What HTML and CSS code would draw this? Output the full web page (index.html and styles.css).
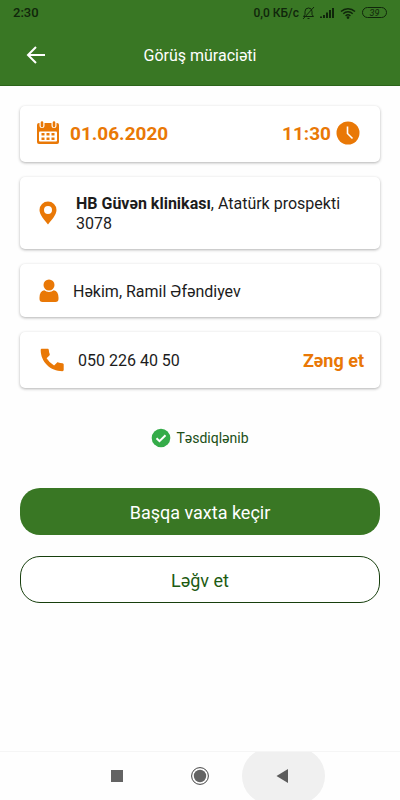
FILE: index.html
```html
<!DOCTYPE html>
<html lang="az">
<head>
<meta charset="utf-8">
<meta name="viewport" content="width=device-width, initial-scale=1">
<title>Görüş müraciəti</title>
<link rel="stylesheet" href="styles.css">
</head>
<body>
<header class="header">
  <div class="status-bar">
    <span class="clock">2:30</span>
    <span class="rate">0,0 КБ/с</span>
    <svg class="bell" width="13" height="14" viewBox="0 0 13 14" fill="none" stroke="currentColor" stroke-width="1"><path d="M1.500 10.500h10L10 8.500V5.500a3.500 3.500 0 0 0-7 0v3zM5.500 12.500h2M1 13 12 1"/></svg>
    <svg class="signal" width="16" height="12" viewBox="0 0 16 12" fill="currentColor"><path d="M1 9.500h2V11H1zM4 8h2v3H4zM7 5.500h2V11H7zM10 3h2v8h-2zM13 1h2v10h-2z"/></svg>
    <svg class="wifi" width="16" height="12" viewBox="0 0 16 12" fill="none" stroke="currentColor" stroke-width="1.500"><path d="M1 4.500a10 10 0 0 1 14 0M3.300 6.800a6.700 6.700 0 0 1 9.400 0M5.600 9a3.400 3.400 0 0 1 4.800 0"/><circle cx="8" cy="10.600" r=".6"/></svg>
    <span class="battery">39</span>
  </div>
  <div class="title-bar">
    <button class="back" type="button" aria-label="Geri"><svg width="20" height="20" viewBox="0 0 20 20" fill="none" stroke="currentColor" stroke-width="2"><path d="M19 10H2M10 2l-8 8 8 8"/></svg></button>
    <h1>Görüş müraciəti</h1>
  </div>
</header>
<main class="content">
  <section class="card when">
    <svg class="icon" width="24" height="24" viewBox="0 0 24 24"><rect x="1" y="2" width="22" height="21" rx="2" fill="currentColor"/><path d="M6 0v4.500M18 0v4.500" fill="none" stroke="#fff" stroke-width="5" stroke-linecap="round"/><path d="M6 1.500v3.500M18 1.500v3.500" fill="none" stroke="currentColor" stroke-width="2.600" stroke-linecap="round"/><rect x="3" y="10.500" width="18" height="10" rx="1" fill="#fff"/><path fill="currentColor" d="M5.500 12h3v2.500h-3zM10.500 12h3v2.500h-3zM15.500 12h3v2.500h-3zM5.500 16.500h3V19h-3zM10.500 16.500h3V19h-3zM15.500 16.500h3V19h-3z"/></svg>
    <time class="date">01.06.2020</time>
    <time class="time">11:30</time>
    <svg class="icon" width="24" height="24" viewBox="0 0 24 24"><circle cx="12" cy="12" r="11.500" fill="currentColor"/><path d="M11.500 5.500v7l5 5" fill="none" stroke="#fff" stroke-width="1.600"/></svg>
  </section>
  <section class="card place">
    <svg class="icon" width="24" height="24" viewBox="0 0 24 24"><path fill="currentColor" fill-rule="evenodd" d="M12 .5a8.500 8.500 0 0 0-8.500 8.500C3.500 14 8.500 19 12 23.500 15.500 19 20.500 14 20.500 9A8.500 8.500 0 0 0 12 .5zm0 4.500a4 4 0 1 1 0 8 4 4 0 0 1 0-8z"/></svg>
    <p><strong>HB Güvən klinikası</strong>, Atatürk prospekti 3078</p>
  </section>
  <section class="card doctor">
    <svg class="icon" width="24" height="24" viewBox="0 0 24 24" fill="currentColor"><circle cx="12" cy="6" r="5.500"/><path d="M7.200 11.300a7.500 7.500 0 0 0 9.600 0c3 .6 4.700 3.200 4.700 7.200v1.500a3 3 0 0 1-3 3h-13a3 3 0 0 1-3-3v-1.500c0-4 1.700-6.600 4.700-7.200z"/></svg>
    <p>Həkim, Ramil Əfəndiyev</p>
  </section>
  <section class="card phone">
    <svg class="icon" width="24" height="24" viewBox="0 0 24 24" fill="currentColor"><path d="M2 .7h5.500c.8 0 1.200.5 1.300 1.200.1 1.500.4 2.900.9 4.200.2.500.1 1-.3 1.400L6.600 10.300a20 20 0 0 0 7.500 7.200l2.800-2.800c.4-.4.900-.5 1.400-.3 1.300.4 2.700.7 4.200.8.700.1 1.200.6 1.200 1.300v5.300c0 .9-.5 1.400-1.300 1.400C10.500 23.200.7 14 .7 2c0-.8.500-1.300 1.300-1.300z"/></svg>
    <p>050 226 40 50</p>
    <a class="call" href="tel:0502264050">Zəng et</a>
  </section>
  <p class="confirmed">
    <svg width="20" height="20" viewBox="0 0 20 20"><circle cx="10" cy="10" r="9.300" fill="#35ac49"/><path d="m5.500 10.200 3 3 6-6" fill="none" stroke="#fff" stroke-width="2"/></svg>
    Təsdiqlənib
  </p>
  <div class="actions">
    <button class="btn primary" type="button">Başqa vaxta keçir</button>
    <button class="btn outline" type="button">Ləğv et</button>
  </div>
</main>
<nav class="nav">
  <button type="button" aria-label="Son proqramlar"><svg width="20" height="20" viewBox="0 0 20 20"><path d="M4 4h12v12H4z" fill="#636363"/></svg></button>
  <button type="button" aria-label="Əsas ekran"><svg width="20" height="20" viewBox="0 0 20 20"><circle cx="10" cy="10" r="8.400" fill="none" stroke="#444"/><circle cx="10" cy="10" r="6.200" fill="#636363"/></svg></button>
  <button class="pressed" type="button" aria-label="Geri"><svg width="20" height="20" viewBox="0 0 20 20"><path d="M15 3v14L3.500 10z" fill="#5c5c5c"/></svg></button>
</nav>
</body>
</html>
```
FILE: styles.css
```css
* { box-sizing: border-box; }

body {
  margin: 0;
  min-height: 100vh;
  display: flex;
  flex-direction: column;
  background: #fefefe;
  color: #1c1c1c;
  font-family: Roboto, "Noto Sans", sans-serif;
  font-size: 16px;
  line-height: 20px;
}

h1, p { margin: 0; }

svg { display: block; flex: none; }

button {
  font: inherit;
  color: inherit;
  border: 0;
  padding: 0;
  background: none;
}

.header {
  background: #397724;
  color: #fff;
  border-bottom: 1px solid #2c641a;
}

.status-bar {
  display: flex;
  align-items: center;
  height: 25px;
  padding: 0 13px;
  color: #10260b;
  font-size: 12px;
  font-weight: 500;
}

.clock { margin-right: auto; font-size: 13px; }

.bell { margin-left: 3px; }
.signal { margin-left: 4px; }
.wifi { margin-left: 5px; }

.battery {
  width: 25px;
  height: 11px;
  margin-left: 6px;
  border: 1px solid;
  border-radius: 6px;
  font-size: 9px;
  font-style: italic;
  font-weight: 400;
  line-height: 10px;
  text-align: center;
}

.title-bar {
  display: grid;
  grid-template-columns: 20px 1fr 20px;
  align-items: center;
  height: 60px;
  padding: 0 26px;
}

h1 {
  padding-top: 2px;
  font-size: 16px;
  font-weight: 400;
  text-align: center;
}

.content { flex: 1; padding: 20px 20px 24px; }

.card {
  display: flex;
  align-items: center;
  min-height: 56px;
  margin-bottom: 15px;
  padding: 0 16px;
  background: #fff;
  border-radius: 5px;
  box-shadow: 0 1px 3px rgba(0, 0, 0, .3);
}

.icon, .call, .when { color: #e97806; }

.card p, .call, .when time { padding-top: 2px; }

.when {
  padding-right: 20px;
  padding-bottom: 2px;
  font-size: 19px;
  font-weight: 700;
}

.date { margin-left: 10px; }
.time { margin-left: auto; margin-right: 5px; }

.place { min-height: 72px; }
.place p { margin-left: 16px; }

.doctor { min-height: 53px; padding-left: 17px; }
.doctor p { margin-left: 12px; }

.phone { margin-bottom: 0; padding-left: 20px; }
.phone p { margin-left: 14px; }

.call {
  margin-left: auto;
  font-size: 18px;
  font-weight: 700;
  text-decoration: none;
}

.confirmed {
  display: flex;
  align-items: center;
  justify-content: center;
  gap: 5px;
  margin: 40px 0;
  color: #214f18;
  font-size: 14px;
}

.actions { display: grid; gap: 21px; }

.btn {
  height: 47px;
  padding-top: 2px;
  border-radius: 20px;
  font-size: 18px;
}

.primary { background: #397724; color: #fff; }

.outline {
  background: #fff;
  border: 1px solid #173f0d;
  color: #1d5b12;
}

.nav {
  display: flex;
  justify-content: center;
  align-items: center;
  height: 49px;
  overflow: hidden;
  border-top: 1px solid #f5f5f5;
}

.nav button {
  display: flex;
  flex: none;
  align-items: center;
  justify-content: center;
  width: 83px;
  height: 56px;
  border-radius: 28px;
}

.nav .pressed { background: #f0f0f0; }
```
